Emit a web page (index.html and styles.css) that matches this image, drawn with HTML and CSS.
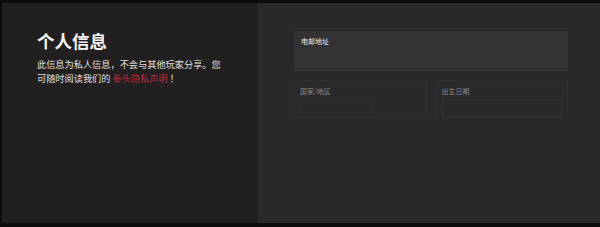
FILE: index.html
```html
<!DOCTYPE html>
<html lang="zh-CN">
<head>
    <meta charset="UTF-8">
    <title>个人信息</title>
    <link rel="stylesheet" href="styles.css">
</head>
<body>
    <div class="frame">
        <div class="intro">
            <h1>个人信息</h1>
            <p>
                <span class="line">此信息为私人信息，不会与其他玩家分享。您</span>
                <span class="line">可随时阅读我们的 <a href="#">拳头隐私声明</a> ！</span>
            </p>
        </div>
        <div class="form">
            <div class="field email">
                <label>电邮地址</label>
            </div>
            <div class="row">
                <div class="field small disabled">
                    <label>国家/地区</label>
                    <div class="select"></div>
                </div>
                <div class="field small">
                    <label>出生日期</label>
                    <div class="date"></div>
                </div>
            </div>
        </div>
    </div>
</body>
</html>
```

FILE: styles.css
```css
html, body {
    margin: 0;
    padding: 0;
    background: #0d0c0d;
}
body {
    width: 600px;
    height: 227px;
    padding: 3px 0 4px 2px;
    box-sizing: border-box;
    font-family: "Noto Sans CJK SC", "Noto Sans", sans-serif;
}
.frame {
    display: flex;
    height: 100%;
}
.intro {
    width: 221px;
    background: #221f21;
    padding: 26px 0 0 35px;
}
.intro h1 {
    margin: 0;
    font-size: 17.5px;
    line-height: 24px;
    font-weight: 700;
    color: #f4f4f4;
}
.intro p {
    margin: 5px 0 0;
    font-size: 9.2px;
    line-height: 13.5px;
    color: #e0e0e0;
}
.intro .line {
    display: block;
    white-space: nowrap;
}
.intro a {
    color: #b82a3a;
    text-decoration: none;
}
.form {
    flex: 1;
    background: #2a282a;
    padding: 28px 32px 0 36px;
}
.field label {
    display: block;
    font-size: 7px;
    line-height: 10px;
}
.email {
    height: 40px;
    background: #333133;
    padding: 5px 7px 0;
    box-sizing: border-box;
    color: #e6e6e6;
}
.row {
    display: flex;
    gap: 9px;
    margin-top: 9px;
}
.small {
    flex: 1;
    height: 38px;
    border: 1px solid #2f2d2f;
    padding: 5px 5px 0;
    box-sizing: border-box;
}
.disabled label {
    color: #5c5a5c;
}
.small label {
    color: #8a888a;
}
.select {
    width: 70px;
    height: 16px;
    margin-top: 2px;
    border: 1px solid #2d2b2d;
}
.date {
    height: 16px;
    margin-top: 3px;
    border: 1px solid #333133;
}
```
